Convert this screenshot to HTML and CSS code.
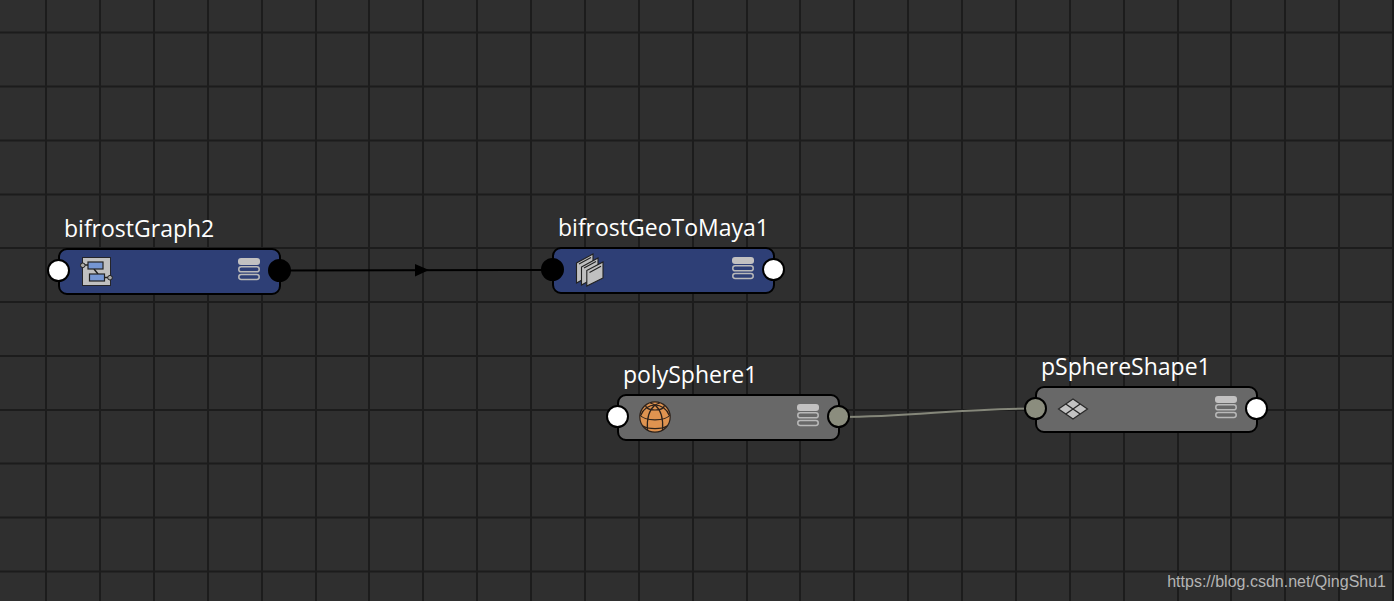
FILE: index.html
```
<!DOCTYPE html>
<html lang="en">
<head>
    <meta charset="UTF-8">
    <meta name="viewport" content="width=device-width, initial-scale=1.0">
    <title>Node Editor</title>
    <link rel="stylesheet" href="styles.css">
</head>
<body>
    <!-- shared symbol: attribute display mode -->
    <svg class="defs" aria-hidden="true">
        <symbol id="bars" viewBox="0 0 22 23">
            <rect x="0" y="0" width="22" height="7" rx="3" fill="#c2c1c1"/>
            <rect x="0.8" y="8.8" width="20.4" height="5" rx="2.4" fill="none" stroke="#b9b9b9" stroke-width="1.5"/>
            <rect x="0.8" y="16.5" width="20.4" height="5" rx="2.4" fill="none" stroke="#b9b9b9" stroke-width="1.5"/>
        </symbol>
    </svg>

    <main class="canvas">
        <!-- grid -->
        <svg class="layer grid" aria-hidden="true">
            <path d="M46 0v2000M100 0v2000M154 0v2000M208 0v2000M262 0v2000M316 0v2000M369 0v2000M423 0v2000M477 0v2000M531 0v2000M585 0v2000M639 0v2000M693 0v2000M747 0v2000M800 0v2000M854 0v2000M908 0v2000M962 0v2000M1016 0v2000M1070 0v2000M1124 0v2000M1178 0v2000M1231 0v2000M1285 0v2000M1339 0v2000M1393 0v2000"/>
            <path d="M0 32.5h3000M0 86.5h3000M0 140.5h3000M0 194.5h3000M0 248h3000M0 302h3000M0 356h3000M0 410h3000M0 463.5h3000M0 517.5h3000M0 571.5h3000"/>
        </svg>

        <!-- connections -->
        <svg class="layer wires" aria-hidden="true">
            <path class="wire-geo" d="M280 270.5L552 270"/>
            <path class="arrow" d="M415 264L429 270L415 276.5z"/>
            <path class="wire-mesh" d="M839 417C915 417 955 408.5 1035 408.5"/>
        </svg>

        <section class="node bifrost graph">
            <div class="name">bifrostGraph2</div>
            <div class="body">
                <span class="port in"></span>
                <svg class="icon" viewBox="0 0 32 32">
                    <rect x="2.5" y="2.5" width="28" height="28" fill="#c0c0c0" stroke="#25252a"/>
                    <path d="M14 14l4 5M2 10h6M24 22.5h6" stroke="#222" stroke-width="1.5" fill="none"/>
                    <rect x="8" y="7" width="15" height="7" fill="#7596d3" stroke="#222" stroke-width="1.2"/>
                    <rect x="9.5" y="19" width="15" height="7" fill="#7596d3" stroke="#222" stroke-width="1.2"/>
                    <circle cx="2.8" cy="10.3" r="2.3" fill="#aaa" stroke="#222"/>
                    <circle cx="30" cy="22.7" r="2.3" fill="#aaa" stroke="#222"/>
                </svg>
                <svg class="bars"><use href="#bars"/></svg>
                <span class="port out linked"></span>
            </div>
        </section>

        <section class="node bifrost geo">
            <div class="name">bifrostGeoToMaya1</div>
            <div class="body">
                <span class="port in linked"></span>
                <svg class="icon" viewBox="0 0 32 32">
                    <g fill="#c0c0c0" stroke="#222" stroke-width="1.1">
                        <path d="M2.5 9L19 0V20L2.5 29z"/>
                        <path d="M7.5 13L24 4V22L7.500 31z"/>
                        <path d="M12.800 16.500L29 8V24L12.800 32z"/>
                        <path d="M5 10L17 3.500M10 14L22 7.500M15.500 18.500L27 12.300" fill="none"/>
                    </g>
                </svg>
                <svg class="bars"><use href="#bars"/></svg>
                <span class="port out"></span>
            </div>
        </section>

        <section class="node poly sphere">
            <div class="name">polySphere1</div>
            <div class="body">
                <span class="port in"></span>
                <svg class="icon" viewBox="0 0 32 32">
                    <circle cx="16" cy="16" r="15.2" fill="#df9350"/>
                    <g fill="none" stroke="#2b211b" stroke-width="1.2">
                        <circle cx="16" cy="16" r="15.2"/>
                        <path d="M16 4C10 9 7.500 18 8.500 29.500M16 4C22 9 24.500 18 23.500 29.500"/>
                        <path d="M6.500 4.500C8 10.500 24 10.500 25.500 4.500M1 14C6 20.500 26 20.500 31 14M4 25C9 28.500 23 28.500 28 25"/>
                        <path d="M16 4L11 1.800M16 4L21 1.800M16 4C10 4 4 8 2 14M16 4C22 4 28 8 30 14"/>
                    </g>
                </svg>
                <svg class="bars"><use href="#bars"/></svg>
                <span class="port out mesh"></span>
            </div>
        </section>

        <section class="node poly shape">
            <div class="name">pSphereShape1</div>
            <div class="body">
                <span class="port in mesh"></span>
                <svg class="icon" viewBox="0 0 32 32">
                    <path d="M1.5 16L16 6L30.500 16L16 26z" fill="#c2c2c2" stroke="#282828" stroke-width="1.2"/>
                    <path d="M8.800 11L23.200 21M23.200 11L8.800 21" stroke="#282828" stroke-width="1.4"/>
                </svg>
                <svg class="bars"><use href="#bars"/></svg>
                <span class="port out"></span>
            </div>
        </section>

        <div class="watermark">https://blog.csdn.net/QingShu1</div>
    </main>
</body>
</html>
```
FILE: styles.css
```
* {
    box-sizing: border-box;
}

body {
    margin: 0;
    background-color: #2f2f2f;
    font-family: "Open Sans", "Noto Sans", sans-serif;
}

.defs {
    position: absolute;
    width: 0;
    height: 0;
}

.canvas {
    position: relative;
    min-height: 100vh;
    overflow: hidden;
}

.layer {
    position: absolute;
    inset: 0;
    width: 100%;
    height: 100%;
    fill: none;
}

.grid {
    stroke: #1c1c1c;
    stroke-width: 2;
}

.wires {
    stroke-width: 2;
}

.wire-geo {
    stroke: #000;
}

.arrow {
    fill: #000;
}

.wire-mesh {
    stroke: #85877a;
}

/* nodes sit freely on the canvas */
.node {
    position: absolute;
    width: 223px;
}

.graph {
    left: 58px;
    top: 212px;
}

.geo {
    left: 552px;
    top: 211px;
}

.sphere {
    left: 617px;
    top: 358px;
}

.shape {
    left: 1035px;
    top: 350px;
}

.name {
    height: 36px;
    padding-left: 6px;
    color: #fff;
    font-size: 23px;
    line-height: 32px;
    white-space: nowrap;
}

.body {
    position: relative;
    display: flex;
    align-items: center;
    justify-content: space-between;
    height: 47px;
    padding: 0 19px 2px 20px;
    border: 2px solid #000;
    border-radius: 9px;
}

.bifrost .body {
    background-color: #2e3f76;
}

.poly .body {
    background-color: #686868;
}

.icon {
    width: 32px;
    height: 32px;
    overflow: visible;
}

.bars {
    width: 22px;
    height: 23px;
    margin-bottom: 3px;
}

.port {
    position: absolute;
    top: 9px;
    width: 23px;
    height: 23px;
    border: 2px solid #000;
    border-radius: 50%;
    background-color: #fff;
}

.in {
    left: -13px;
}

.out {
    right: -12px;
}

.linked {
    background-color: #000;
}

.mesh {
    background-color: #8b8d7e;
}

.watermark {
    position: absolute;
    right: 8px;
    bottom: 9px;
    color: #b4b4b4;
    font-family: "Liberation Sans", Arial, sans-serif;
    font-size: 16px;
    line-height: 20px;
}
```
